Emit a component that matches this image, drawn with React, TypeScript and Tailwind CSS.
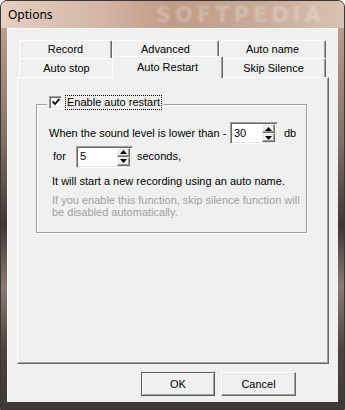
import React from "react";

const sunken =
  "border border-t-[#a0a0a0] border-l-[#a0a0a0] border-b-white border-r-white shadow-[inset_1px_1px_0_#696969,inset_-1px_-1px_0_#e3e3e3]";
const raised =
  "border border-t-white border-l-white border-b-[#696969] border-r-[#696969] shadow-[inset_-1px_-1px_0_#a0a0a0,inset_1px_1px_0_#e3e3e3]";

function Tab({ label, width, selected }: { label: string; width: string; selected?: boolean }) {
  if (selected) {
    return (
      <div
        className={`${width} relative z-10 -mx-[2px] -mt-[2px] -mb-[1px] h-[22px] flex justify-center pt-[2px] bg-[#f0f0f0] border-l border-t border-r border-l-white border-t-white border-r-[#696969] rounded-t-[2px] shadow-[inset_-1px_0_0_#a0a0a0]`}
      >
        {label}
      </div>
    );
  }
  return (
    <div
      className={`${width} h-full flex items-center justify-center bg-[#f0f0f0] border-l border-t border-r border-l-white border-t-white border-r-[#696969] rounded-t-[2px] shadow-[inset_-1px_0_0_#a0a0a0]`}
    >
      {label}
    </div>
  );
}

function Spin({ value, width }: { value: string; width: string }) {
  return (
    <div className={`${width} h-[22px] bg-white flex items-stretch ${sunken} p-[1px]`}>
      <div className="flex-1 pl-[2px] flex items-center">{value}</div>
      <div className="w-[13px] flex flex-col mr-[1px]">
        <div className={`flex-1 bg-[#f0f0f0] flex items-center justify-center ${raised}`}>
          <svg width="7" height="4" viewBox="0 0 7 4">
            <path d="M3.5 0 L7 4 L0 4 Z" fill="#000" />
          </svg>
        </div>
        <div className={`flex-1 bg-[#f0f0f0] flex items-center justify-center ${raised}`}>
          <svg width="7" height="4" viewBox="0 0 7 4">
            <path d="M0 0 L7 0 L3.5 4 Z" fill="#000" />
          </svg>
        </div>
      </div>
    </div>
  );
}

export default function App() {
  return (
    <div className="w-[345px] h-[410px] font-['Liberation_Sans',Arial,sans-serif] text-[11px] text-black">
      <div className="w-full h-full flex flex-col rounded-t-[7px] overflow-hidden border border-[#3f3532] bg-[linear-gradient(180deg,#c8a894_0%,#7f6f66_35%,#3e3532_55%,#8a7b72_70%,#4d4440_85%,#3e3836_100%)]">
        {/* Title bar */}
        <div className="relative h-[27px] flex items-center pl-[7px] bg-[linear-gradient(90deg,#e6d0c2_0%,#d2b5a2_30%,#bf9c86_50%,#c8aa97_75%,#d9c2b3_100%)]">
          <span className="font-['Noto_Sans',sans-serif] text-[12px] leading-none pt-[1px]">Options</span>
          <span className="absolute left-[155px] top-[4px] font-['DejaVu_Sans',sans-serif] font-bold text-[21px] leading-none tracking-[4px] text-white/25 blur-[1px]">
            SOFTPEDIA
          </span>
        </div>

        {/* Body */}
        <div className="flex-1 px-[6px] pb-[7px] flex">
          <div className="flex-1 bg-[#f0f0f0] border-l border-t border-l-[#fafafa] border-t-[#fafafa] flex flex-col">
            {/* Tab control */}
            <div className="ml-[9px] mt-[11px] w-[312px] flex flex-col">
              <div className="h-[18px] flex pl-[2px]">
                <Tab label="Record" width="w-[93px]" />
                <Tab label="Advanced" width="w-[107px]" />
                <Tab label="Auto name" width="w-[107px]" />
              </div>
              <div className="h-[19px] flex pl-[2px]">
                <Tab label="Auto stop" width="w-[95px]" />
                <Tab label="Auto Restart" width="w-[111px]" selected />
                <Tab label="Skip Silence" width="w-[105px]" />
              </div>
              <div className="h-[287px] border border-l-white border-t-white border-r-[#696969] border-b-[#696969] shadow-[inset_-1px_-1px_0_#a0a0a0] pl-[18px] pt-[26px]">
                {/* Group box */}
                <div className="relative w-[271px] h-[129px] border border-[#a0a0a0] shadow-[1px_1px_0_#fff,inset_1px_1px_0_#fff]">
                  <div className="absolute left-[10px] -top-[11px] flex items-center bg-[#f0f0f0] pl-[2px] pr-[1px] h-[16px]">
                    <div className={`w-[13px] h-[13px] bg-white ${sunken} flex items-center justify-center`}>
                      <svg width="8" height="8" viewBox="0 0 8 8">
                        <path d="M0.5 3.5 L3 6 L7.5 1" stroke="#000" strokeWidth="1.8" fill="none" />
                      </svg>
                    </div>
                    <div className="ml-[3px] h-[15px] flex items-center px-[1px] border border-dotted border-black">
                      Enable auto restart
                    </div>
                  </div>

                  <div className="flex flex-col pt-[17px]">
                    <div className="flex items-center h-[22px] pl-[12px]">
                      <span className="w-[181px]">When the sound level is lower than -</span>
                      <Spin value="30" width="w-[48px]" />
                      <span className="ml-[6px]">db</span>
                    </div>
                    <div className="flex items-center h-[21px] mt-[2px] pl-[16px]">
                      <span className="w-[23px]">for</span>
                      <Spin value="5" width="w-[57px]" />
                      <span className="ml-[4px]">seconds,</span>
                    </div>
                    <div className="pl-[15px] mt-[8px] leading-[13px]">
                      It will start a new recording using an auto name.
                    </div>
                    <div className="pl-[15px] mt-[6px] leading-[12px] text-[#a0a0a0]">
                      If you enable this function, skip silence function will
                      <br />
                      be disabled automatically.
                    </div>
                  </div>
                </div>
              </div>
            </div>

            {/* Buttons */}
            <div className="flex justify-end gap-[6px] pr-[42px] mt-[8px]">
              <button className="w-[74px] h-[24px] bg-[#f0f0f0] border border-[#5a5a5a] shadow-[inset_1px_1px_0_#fff,inset_-1px_-1px_0_#a0a0a0]">
                OK
              </button>
              <button className={`w-[75px] h-[24px] bg-[#f0f0f0] ${raised}`}>Cancel</button>
            </div>
          </div>
        </div>
      </div>
    </div>
  );
}
